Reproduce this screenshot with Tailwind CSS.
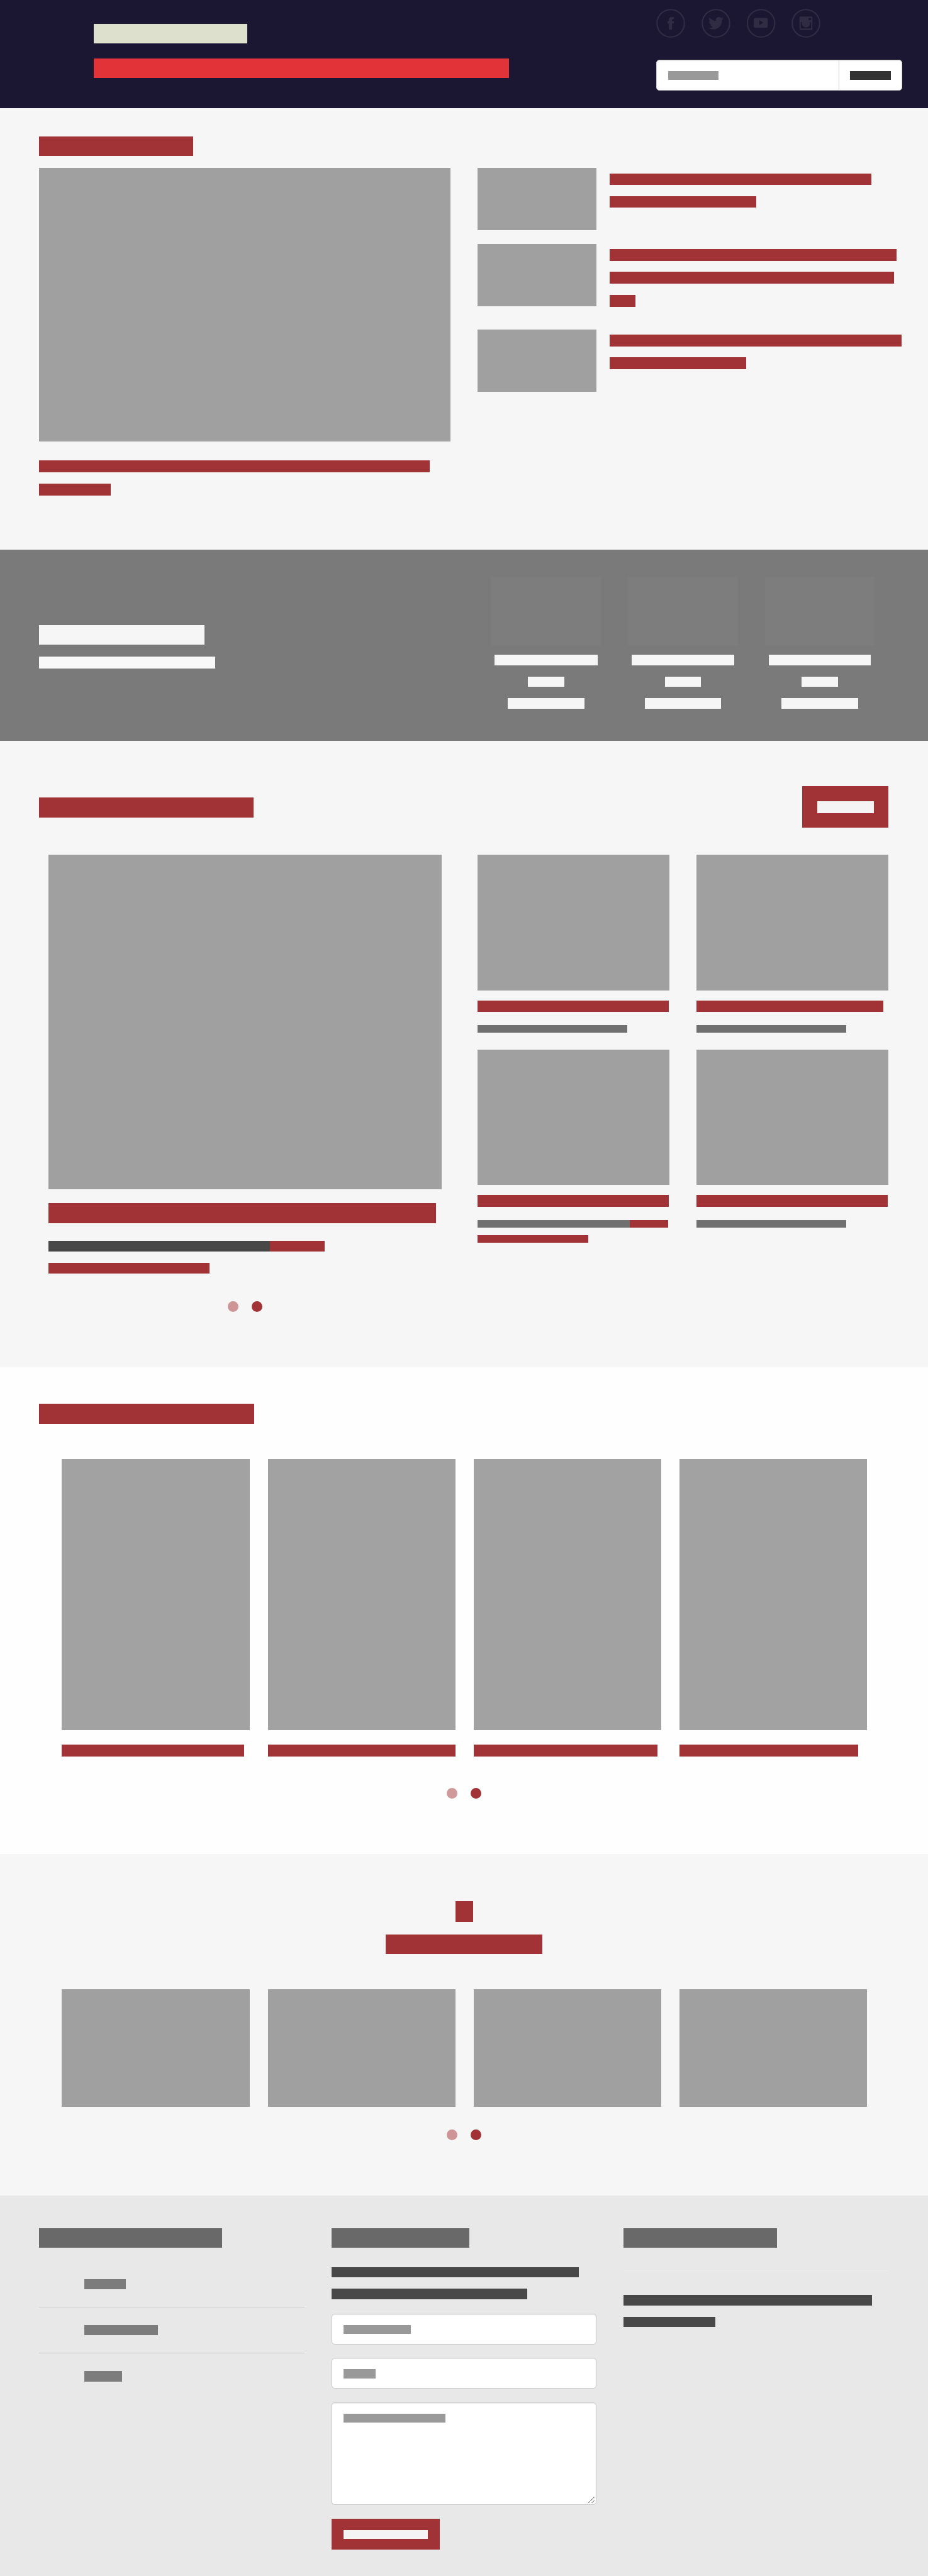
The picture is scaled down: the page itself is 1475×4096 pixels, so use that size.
<!DOCTYPE html>
<html lang="en">
<head>
<meta charset="utf-8">
<title>Home</title>
<script src="https://cdn.jsdelivr.net/npm/@tailwindcss/browser@4"></script>
</head>
<body class="w-[1475px] bg-[#f6f6f6] font-['Open_Sans',sans-serif]">

<header class="flex h-[172px] bg-[#1b1732]">
  <div class="w-[1043px] pt-[38px] pl-[149px]">
    <div class="h-[31px] w-[244px] bg-[#dce0cd]"></div>
    <div class="mt-6 h-[31px] w-[660px] bg-[#e23438]"></div>
  </div>
  <div class="w-[391px] pt-[14px]">
    <div class="flex gap-[25.8px] text-[#302c44]">
      <svg class="size-[46px]" viewBox="0 0 64 64" fill="none"><circle cx="32" cy="32" r="30.3" stroke="currentColor" stroke-width="3"/><path fill="currentColor" d="M28 46.3V32.3h-3.3v-4.8H28v-3.2c0-4.2 2.2-6.3 6.2-6.3 2 0 3.6.1 5.1.4v4.4h-2.7c-1.300 0-1.600.6-1.600 1.800v2.900h4.300l-.6 4.800H35v14z"/></svg>
      <svg class="size-[46px]" viewBox="0 0 64 64" fill="none"><circle cx="32" cy="32" r="30.3" stroke="currentColor" stroke-width="3"/><g transform="translate(15.300 15.200) scale(1.390)"><path fill="currentColor" d="M23.950 4.570a10 10 0 0 1-2.820.77 4.960 4.960 0 0 0 2.160-2.720c-.95.55-2 .95-3.120 1.180a4.920 4.920 0 0 0-8.390 4.480C7.690 8.100 4.070 6.130 1.640 3.160a4.820 4.820 0 0 0-.67 2.480c0 1.710.87 3.210 2.190 4.100a4.900 4.900 0 0 1-2.230-.62v.06a4.920 4.920 0 0 0 3.950 4.830 5 5 0 0 1-2.210.08 4.940 4.940 0 0 0 4.600 3.420A9.870 9.870 0 0 1 0 19.540a14 14 0 0 0 7.550 2.210c9.050 0 14-7.500 14-13.980 0-.21 0-.42-.02-.63a9.940 9.940 0 0 0 2.420-2.570z"/></g></svg>
      <svg class="size-[46px]" viewBox="0 0 64 64" fill="none"><circle cx="31.500" cy="32" r="30.300" stroke="currentColor" stroke-width="3"/><path fill="currentColor" fill-rule="evenodd" d="M19.500 20h22.700a4.200 4.200 0 0 1 4.200 4.200v13.600a4.200 4.200 0 0 1-4.200 4.200H19.500a4.200 4.200 0 0 1-4.200-4.200V24.200a4.200 4.200 0 0 1 4.200-4.200zM27.800 25.300v10.400l8.600-5.200z"/></svg>
      <svg class="size-[46px]" viewBox="0 0 64 64" fill="none"><circle cx="32" cy="32" r="30.3" stroke="currentColor" stroke-width="3"/><path fill="currentColor" fill-rule="evenodd" d="M20 17h24a2.300 2.300 0 0 1 2.300 2.300v25.400A2.300 2.300 0 0 1 44 47H20a2.300 2.300 0 0 1-2.300-2.300V19.300A2.300 2.300 0 0 1 20 17zM39 20.300a1 1 0 0 0-1 1v3a1 1 0 0 0 1 1h3.500a1 1 0 0 0 1-1v-3a1 1 0 0 0-1-1zM20.700 29.500v14h22.700v-14h-2.800a9 9 0 1 1-17.200 0z"/><circle cx="32" cy="32.200" r="7" stroke="currentColor" stroke-width="3.400"/></svg>
    </div>
    <div class="mt-[35px] flex h-[49px] rounded-[5px] border border-[#ccc] bg-white shadow-[inset_0_1px_1px_rgba(0,0,0,0.075)]">
      <div class="w-[290px] border-r border-[#ccc] pt-[17px] pl-[18px]"><div class="h-[14px] w-[80px] bg-[#999]"></div></div>
      <div class="pt-[17px] pl-[17px]"><div class="h-[14px] w-[65px] bg-[#333]"></div></div>
    </div>
  </div>
</header>

<section class="flex h-[702px] pt-[45px] pl-[62px]">
  <div class="w-[697px]">
    <div class="h-[31px] w-[245px] bg-[#a13336]"></div>
    <div class="mt-[19px] h-[435px] w-[654px] bg-[#a0a0a0]"></div>
    <div class="mt-[30px] h-[19px] w-[621px] bg-[#a13336]"></div>
    <div class="mt-[18px] h-[19px] w-[114px] bg-[#a13336]"></div>
  </div>
  <div class="pt-[50px]">
    <div class="flex h-[121px] gap-[21px]">
      <div class="h-[99px] w-[189px] bg-[#a0a0a0]"></div>
      <div class="pt-[9px]">
        <div class="h-[18px] w-[416px] bg-[#a13336]"></div>
        <div class="mt-[18px] h-[18px] w-[233px] bg-[#a13336]"></div>
      </div>
    </div>
    <div class="flex h-[136px] gap-[21px]">
      <div class="h-[99px] w-[189px] bg-[#a0a0a0]"></div>
      <div class="pt-[8px]">
        <div class="h-[19px] w-[456px] bg-[#a13336]"></div>
        <div class="mt-[17px] h-[19px] w-[452px] bg-[#a13336]"></div>
        <div class="mt-[18px] h-[19px] w-[41px] bg-[#a13336]"></div>
      </div>
    </div>
    <div class="flex gap-[21px]">
      <div class="h-[99px] w-[189px] bg-[#a0a0a0]"></div>
      <div class="pt-[8px]">
        <div class="h-[19px] w-[464px] bg-[#a13336]"></div>
        <div class="mt-[17px] h-[19px] w-[217px] bg-[#a13336]"></div>
      </div>
    </div>
  </div>
</section>

<section class="flex h-[304px] bg-[#7a7a7a] pl-[62px]">
  <div class="w-[719px] pt-[120px]">
    <div class="h-[31px] w-[263px] bg-[#f6f6f6]"></div>
    <div class="mt-[19px] h-[19px] w-[280px] bg-[#f8f8f8]"></div>
  </div>
  <div class="grid grid-cols-[174px_175px_174px] gap-[43px] pt-[43px]">
    <div class="flex flex-col items-center">
      <div class="h-[109px] w-full bg-[#7d7d7d]"></div>
      <div class="mt-[15px] h-[17px] w-[164px] bg-[#f6f6f6]"></div>
      <div class="mt-[18px] h-[16px] w-[58px] bg-[#f6f6f6]"></div>
      <div class="mt-[18px] h-[17px] w-[122px] bg-[#f6f6f6]"></div>
    </div>
    <div class="flex flex-col items-center">
      <div class="h-[109px] w-full bg-[#7d7d7d]"></div>
      <div class="mt-[15px] h-[17px] w-[163px] bg-[#f6f6f6]"></div>
      <div class="mt-[18px] h-[16px] w-[57px] bg-[#f6f6f6]"></div>
      <div class="mt-[18px] h-[17px] w-[121px] bg-[#f6f6f6]"></div>
    </div>
    <div class="flex flex-col items-center">
      <div class="h-[109px] w-full bg-[#7d7d7d]"></div>
      <div class="mt-[15px] h-[17px] w-[162px] bg-[#f6f6f6]"></div>
      <div class="mt-[18px] h-[16px] w-[58px] bg-[#f6f6f6]"></div>
      <div class="mt-[18px] h-[17px] w-[122px] bg-[#f6f6f6]"></div>
    </div>
  </div>
</section>

<section class="h-[996px] pt-[72px]">
  <div class="flex h-[66px] justify-between pr-[63px] pl-[62px]">
    <div class="mt-[18px] h-[32px] w-[341px] bg-[#a13336]"></div>
    <div class="w-[137px] bg-[#a13336] pt-[24px] pl-[24px]"><div class="h-[19px] w-[90px] bg-[#f4f4f4]"></div></div>
  </div>
  <div class="mt-[43px] flex pl-[77px]">
    <div class="w-[682px]">
      <div class="h-[532px] w-[625px] bg-[#a0a0a0]"></div>
      <div class="mt-[22px] h-[32px] w-[616px] bg-[#a13336]"></div>
      <div class="mt-[28px] flex h-[17px]"><div class="w-[352px] bg-[#484848]"></div><div class="w-[87px] bg-[#a13336]"></div></div>
      <div class="mt-[18px] h-[17px] w-[256px] bg-[#a13336]"></div>
      <div class="mt-[43.600px] flex w-[625px] justify-center gap-[20.300px]"><div class="size-[17.300px] rounded-full bg-[#ce9596]"></div><div class="size-[17.300px] rounded-full bg-[#a13336]"></div></div>
    </div>
    <div class="grid w-[653px] grid-cols-[305px_305px] content-start gap-x-[43px]">
      <div class="h-[310px]">
        <div class="h-[216px] bg-[#a0a0a0]"></div>
        <div class="mt-[16px] h-[18px] w-[304px] bg-[#a13336]"></div>
        <div class="mt-[21px] h-[12px] w-[238px] bg-[#707070]"></div>
      </div>
      <div>
        <div class="h-[216px] bg-[#a0a0a0]"></div>
        <div class="mt-[16px] h-[18px] w-[297px] bg-[#a13336]"></div>
        <div class="mt-[21px] h-[12px] w-[238px] bg-[#707070]"></div>
      </div>
      <div>
        <div class="h-[215px] bg-[#a0a0a0]"></div>
        <div class="mt-[16px] h-[19px] w-[304px] bg-[#a13336]"></div>
        <div class="mt-[21px] flex h-[12px]"><div class="w-[242px] bg-[#707070]"></div><div class="w-[61px] bg-[#a13336]"></div></div>
        <div class="mt-[12px] h-[12px] w-[176px] bg-[#a13336]"></div>
      </div>
      <div>
        <div class="h-[215px] bg-[#a0a0a0]"></div>
        <div class="mt-[16px] h-[19px] w-[304px] bg-[#a13336]"></div>
        <div class="mt-[21px] h-[12px] w-[238px] bg-[#707070]"></div>
      </div>
    </div>
  </div>
</section>

<section class="h-[774px] bg-[#fefefe] pt-[58px]">
  <div class="ml-[62px] h-[32px] w-[342px] bg-[#a13336]"></div>
  <div class="mt-[56px] ml-[98.400px] grid w-[1279.800px] grid-cols-4 gap-[29px]">
    <div><div class="h-[431px] bg-[#a2a2a2]"></div><div class="mt-[23px] h-[19px] w-[290px] bg-[#a13336]"></div></div>
    <div><div class="h-[431px] bg-[#a2a2a2]"></div><div class="mt-[23px] h-[19px] bg-[#a13336]"></div></div>
    <div><div class="h-[431px] bg-[#a2a2a2]"></div><div class="mt-[23px] h-[19px] w-[292px] bg-[#a13336]"></div></div>
    <div><div class="h-[431px] bg-[#a2a2a2]"></div><div class="mt-[23px] h-[19px] w-[284px] bg-[#a13336]"></div></div>
  </div>
  <div class="mt-[50px] flex justify-center gap-[20.300px]"><div class="size-[17.300px] rounded-full bg-[#d09a9b]"></div><div class="size-[17.300px] rounded-full bg-[#a13336]"></div></div>
</section>

<section class="flex h-[543px] flex-col items-center pt-[75px]">
  <div class="h-[33px] w-[28px] bg-[#a13336]"></div>
  <div class="mt-[20px] h-[31px] w-[249px] bg-[#a13336]"></div>
  <div class="mt-[56px] ml-[1.600px] grid w-[1279.800px] grid-cols-4 gap-[29px]">
    <div class="h-[187px] bg-[#a0a0a0]"></div>
    <div class="h-[187px] bg-[#a0a0a0]"></div>
    <div class="h-[187px] bg-[#a0a0a0]"></div>
    <div class="h-[187px] bg-[#a0a0a0]"></div>
  </div>
  <div class="mt-[35.700px] flex gap-[20.300px]"><div class="size-[17.300px] rounded-full bg-[#ce9596]"></div><div class="size-[17.300px] rounded-full bg-[#a13336]"></div></div>
</section>

<footer class="grid h-[605px] grid-cols-[422px_421px_421px] gap-x-[43px] bg-[#e8e8e8] pt-[52px] pl-[62px]">
  <div>
    <div class="h-[31px] w-[291px] bg-[#696969]"></div>
    <div class="h-[95px] border-b border-[#cbcbcb] pt-[50px] pl-[72px]"><div class="h-[16px] w-[66px] bg-[#7c7c7c]"></div></div>
    <div class="h-[73px] border-b border-[#cbcbcb] pt-[28px] pl-[72px]"><div class="h-[16px] w-[117px] bg-[#7c7c7c]"></div></div>
    <div class="pt-[28px] pl-[72px]"><div class="h-[17px] w-[60px] bg-[#7c7c7c]"></div></div>
  </div>
  <div>
    <div class="h-[31px] w-[219px] bg-[#696969]"></div>
    <div class="mt-[31px] h-[16px] w-[393px] bg-[#484848]"></div>
    <div class="mt-[18px] h-[17px] w-[311px] bg-[#484848]"></div>
    <div class="mt-[23px] h-[49px] rounded-[5px] border border-[#c8c8c8] bg-white pt-[17px] pl-[18px] shadow-[inset_0_1px_1px_rgba(0,0,0,0.075)]"><div class="h-[14px] w-[107px] bg-[#999]"></div></div>
    <div class="mt-[21px] h-[49px] rounded-[5px] border border-[#c8c8c8] bg-white pt-[17px] pl-[18px] shadow-[inset_0_1px_1px_rgba(0,0,0,0.075)]"><div class="h-[15px] w-[51px] bg-[#999]"></div></div>
    <div class="relative mt-[22px] h-[163px] rounded-[5px] border border-[#c8c8c8] bg-white pt-[17px] pl-[18px] shadow-[inset_0_1px_1px_rgba(0,0,0,0.075)]">
      <div class="h-[14px] w-[162px] bg-[#999]"></div>
      <svg class="absolute right-[1px] bottom-[1px] size-[12px]" viewBox="0 0 12 12" stroke="#555" stroke-width="1" fill="none"><path d="M1 11 11 1M6.500 11 11 6.500"/></svg>
    </div>
    <div class="mt-[22px] h-[49px] w-[172px] bg-[#a13336] pt-[18px] pl-[19px]"><div class="h-[14px] w-[134px] bg-[#f4f4f4]"></div></div>
  </div>
  <div>
    <div class="h-[31px] w-[244px] bg-[#696969]"></div>
    <div class="mt-[36px] h-px bg-[#eee]"></div>
    <div class="mt-[38px] h-[17px] w-[395px] bg-[#484848]"></div>
    <div class="mt-[18px] h-[16px] w-[146px] bg-[#484848]"></div>
  </div>
</footer>
</body>
</html>
